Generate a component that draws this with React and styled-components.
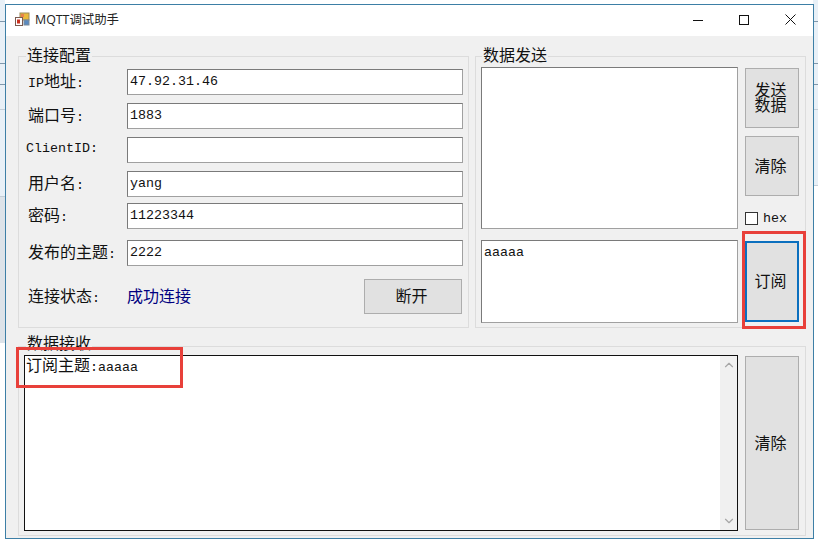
import styled, { createGlobalStyle } from "styled-components";
import { ChevronUp, ChevronDown } from "lucide-react";

const GlobalStyle = createGlobalStyle`
  html, body {
    margin: 0;
    padding: 0;
    background: #fff;
    overflow: hidden;
  }
  * {
    box-sizing: border-box;
  }
`;

const Desktop = styled.div`
  width: 818px;
  height: 547px;
  padding: 4px 0 0 5px;
  background:
    linear-gradient(#7f97ab, #7f97ab) 0 21px / 5px 1px no-repeat,
    linear-gradient(#7f97ab, #7f97ab) 0 63px / 5px 1px no-repeat,
    linear-gradient(#7f97ab, #7f97ab) 0 84px / 5px 1px no-repeat,
    linear-gradient(#c3ced8, #c3ced8) 0 109px / 5px 1px no-repeat,
    linear-gradient(#c3ced8, #c3ced8) 0 196px / 5px 1px no-repeat,
    linear-gradient(#7f97ab, #7f97ab) 813px 21px / 5px 1px no-repeat,
    linear-gradient(#7f97ab, #7f97ab) 813px 63px / 5px 1px no-repeat,
    linear-gradient(#7f97ab, #7f97ab) 813px 84px / 5px 1px no-repeat,
    linear-gradient(#c3ced8, #c3ced8) 813px 109px / 5px 1px no-repeat,
    linear-gradient(#c3ced8, #c3ced8) 813px 185px / 5px 1px no-repeat,
    linear-gradient(#dde3e9, #dde3e9) 0 196px / 5px 147px no-repeat,
    linear-gradient(#e8f0f7, #e8f0f7) 0 0 / 5px 196px no-repeat,
    linear-gradient(#e8f0f7, #e8f0f7) 813px 0 / 5px 185px no-repeat,
    #fff;
`;

const Window = styled.div`
  width: 809px;
  height: 535px;
  display: flex;
  flex-direction: column;
  border: 1px solid #3d7fa6;
  background: #f0f0f0;
  font-family: "Liberation Mono", "Noto Sans CJK SC", monospace;
  font-size: 16px;
  color: #111;
`;

const TitleBar = styled.div`
  height: 31px;
  flex: none;
  display: flex;
  align-items: center;
  padding-left: 9px;
  background: #fff;
`;

const AppIcon = styled.svg`
  width: 15px;
  height: 15px;
  margin: 0 5px 3px 0;
`;

const Title = styled.span`
  flex: 1;
  margin-bottom: 3px;
  font-family: "Open Sans", "Noto Sans CJK SC", sans-serif;
  font-size: 12.4px;
  color: #222;
`;

const ControlButton = styled.div`
  width: 46px;
  height: 31px;
  padding-bottom: 2px;
  display: flex;
  align-items: center;
  justify-content: center;
`;

const Client = styled.div`
  flex: 1;
  padding: 20px 6px 0 12px;
  display: flex;
  flex-direction: column;
  gap: 18px;
`;

const TopRow = styled.div`
  display: flex;
  gap: 6px;
`;

const Group = styled.div`
  position: relative;
  width: ${(p) => p.$width}px;
  height: ${(p) => p.$height}px;
  border: 1px solid #dcdcdc;
`;

const Legend = styled.span`
  position: absolute;
  top: ${(p) => p.$top}px;
  left: ${(p) => p.$left}px;
  padding: 0 1px;
  line-height: 18px;
  background: #f0f0f0;
`;

const ConfigForm = styled.div`
  padding: 12px 5px 0 9px;
  display: flex;
  flex-direction: column;
`;

const FormRow = styled.div`
  height: ${(p) => p.$height || 26}px;
  margin-top: ${(p) => p.$top || 0}px;
  display: flex;
  align-items: center;
`;

const Label = styled.label`
  width: ${(p) => 99 - (p.$shift || 0)}px;
  flex: none;
  margin-left: ${(p) => p.$shift || 0}px;
  margin-bottom: ${(p) => p.$lift || 5}px;
  white-space: nowrap;
`;

const Latin = styled.span`
  font-size: 13.33px;
`;

const TextInput = styled.input`
  flex: 1;
  min-width: 0;
  height: 100%;
  padding: 0 2px 2px;
  border: 1px solid #7a7a7a;
  border-right-color: #a0a0a0;
  border-bottom-color: #a0a0a0;
  border-radius: 0;
  outline: none;
  background: #fff;
  font-family: "Liberation Mono", monospace;
  font-size: 13.33px;
  color: #111;
`;

const StatusText = styled.span`
  flex: 1;
  margin-bottom: 3px;
  color: #000080;
`;

const Button = styled.button`
  width: ${(p) => p.$width || 54}px;
  height: ${(p) => p.$height}px;
  flex: none;
  margin-top: ${(p) => p.$top || 0}px;
  padding: 0 10px 2px 7px;
  border: 1px solid #adadad;
  border-radius: 0;
  background: #e1e1e1;
  font-family: "Noto Sans CJK SC", sans-serif;
  font-size: 16px;
  line-height: 15px;
  color: #111;
`;

const DisconnectButton = styled(Button)`
  margin-right: 1px;
`;

const SubscribeButton = styled(Button)`
  position: relative;
  border: 2px solid #0b6fbe;

  &::after {
    content: "";
    position: absolute;
    top: -12px;
    right: -9px;
    bottom: -9px;
    left: -5px;
    border: 3px solid #e8403a;
  }
`;

const SendPanel = styled.div`
  padding: 10px 0 0 5px;
  display: grid;
  grid-template-columns: 257px 55px;
  column-gap: 7px;
`;

const TextStack = styled.div`
  display: flex;
  flex-direction: column;
  gap: 11px;
`;

const MultiLine = styled.textarea`
  display: block;
  width: 100%;
  height: ${(p) => p.$height}px;
  padding: 4px 2px;
  border: 1px solid #7a7a7a;
  border-right-color: #a0a0a0;
  border-bottom-color: #a0a0a0;
  border-radius: 0;
  outline: none;
  resize: none;
  overflow: hidden;
  background: #fff;
  font-family: "Liberation Mono", monospace;
  font-size: 13.33px;
  line-height: 16px;
  color: #111;
`;

const ButtonStack = styled.div`
  padding-top: 1px;
  display: flex;
  flex-direction: column;
  gap: 8px;
`;

const HexRow = styled.div`
  height: 16px;
  margin: 6px 0 7px;
  display: flex;
  align-items: center;
  gap: 5px;
  font-size: 13.33px;
`;

const CheckBox = styled.span`
  width: 13px;
  height: 13px;
  border: 1px solid #333;
  background: #fff;
`;

const ReceivePanel = styled.div`
  padding: 8px 0 0 5px;
  display: flex;
  gap: 7px;
  align-items: flex-start;
`;

const LogBox = styled.div`
  width: 714px;
  height: 176px;
  display: flex;
  border: 1px solid #111;
  background: #fff;
`;

const LogText = styled.div`
  flex: 1;
  padding: 2px 1px;
  line-height: 18px;
`;

const ScrollBar = styled.div`
  width: 17px;
  display: flex;
  flex-direction: column;
  justify-content: space-between;
  align-items: center;
  padding: 2px 0;
  background: #f0f0f0;
  color: #a6a6a6;
`;

const Highlight = styled.div`
  position: absolute;
  top: 0;
  left: -3px;
  width: 167px;
  height: 41px;
  border: 3px solid #e8403a;
`;

const App = () => {
  return (
    <Desktop>
      <GlobalStyle />
      <Window>
        <TitleBar>
          <AppIcon viewBox="0 0 15 15">
            <rect x="5" y="1" width="9" height="7" fill="#e9b93a" stroke="#9a8a5a" />
            <rect x="6" y="2" width="3" height="3" fill="#e8824a" />
            <rect x="9" y="8" width="5" height="5" fill="#5a8ac0" stroke="#7a8a9a" />
            <rect x="0.5" y="5.5" width="7" height="8" fill="#fff" stroke="#7a5a50" />
            <rect x="2" y="7.5" width="3" height="4" fill="#c8301f" />
          </AppIcon>
          <Title>MQTT调试助手</Title>
          <ControlButton>
            <svg width="10" height="10" viewBox="0 0 10 10">
              <path d="M0 5.5H10" stroke="#111" fill="none" />
            </svg>
          </ControlButton>
          <ControlButton>
            <svg width="10" height="10" viewBox="0 0 10 10">
              <rect x="0.5" y="0.5" width="9" height="9" stroke="#111" fill="none" />
            </svg>
          </ControlButton>
          <ControlButton>
            <svg width="11" height="11" viewBox="0 0 11 11">
              <path d="M0.5 0.5L10.5 10.5M10.5 0.5L0.5 10.5" stroke="#111" fill="none" />
            </svg>
          </ControlButton>
        </TitleBar>
        <Client>
          <TopRow>
            <Group $width={451} $height={272}>
              <Legend $top={-9} $left={7}>连接配置</Legend>
              <ConfigForm>
                <FormRow>
                  <Label><Latin>IP</Latin>地址<Latin>:</Latin></Label>
                  <TextInput readOnly value="47.92.31.46" />
                </FormRow>
                <FormRow $top={8}>
                  <Label>端口号<Latin>:</Latin></Label>
                  <TextInput readOnly value="1883" />
                </FormRow>
                <FormRow $top={8}>
                  <Label $shift={-2}><Latin>ClientID:</Latin></Label>
                  <TextInput readOnly value="" />
                </FormRow>
                <FormRow $top={8}>
                  <Label>用户名<Latin>:</Latin></Label>
                  <TextInput readOnly value="yang" />
                </FormRow>
                <FormRow $top={6}>
                  <Label>密码<Latin>:</Latin></Label>
                  <TextInput readOnly value="11223344" />
                </FormRow>
                <FormRow $top={11}>
                  <Label>发布的主题<Latin>:</Latin></Label>
                  <TextInput readOnly value="2222" />
                </FormRow>
                <FormRow $top={13} $height={35}>
                  <Label $lift={3}>连接状态<Latin>:</Latin></Label>
                  <StatusText>成功连接</StatusText>
                  <DisconnectButton $width={98} $height={35}>断开</DisconnectButton>
                </FormRow>
              </ConfigForm>
            </Group>
            <Group $width={331} $height={272}>
              <Legend $top={-9} $left={6}>数据发送</Legend>
              <SendPanel>
                <TextStack>
                  <MultiLine readOnly $height={162} value="" />
                  <MultiLine readOnly $height={83} value="aaaaa" />
                </TextStack>
                <ButtonStack>
                  <Button $height={60}>发送数据</Button>
                  <Button $height={60}>清除</Button>
                  <HexRow>
                    <CheckBox />
                    hex
                  </HexRow>
                  <SubscribeButton $height={81}>订阅</SubscribeButton>
                </ButtonStack>
              </SendPanel>
            </Group>
          </TopRow>
          <Group $width={788} $height={190}>
            <Legend $top={-11} $left={7}>数据接收</Legend>
            <Highlight />
            <ReceivePanel>
              <LogBox>
                <LogText>订阅主题<Latin>:aaaaa</Latin></LogText>
                <ScrollBar>
                  <ChevronUp size={14} />
                  <ChevronDown size={14} />
                </ScrollBar>
              </LogBox>
              <Button $height={174} $top={1}>清除</Button>
            </ReceivePanel>
          </Group>
        </Client>
      </Window>
    </Desktop>
  );
};

export default App;
